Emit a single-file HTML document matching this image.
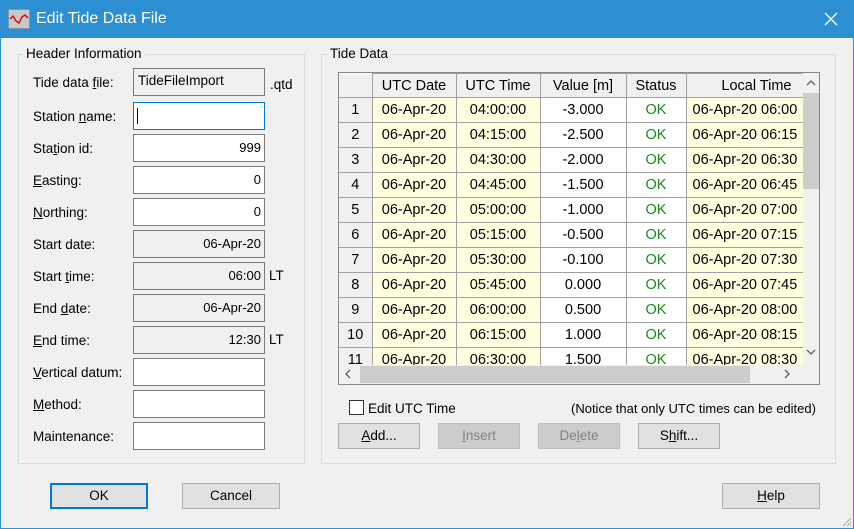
<!DOCTYPE html>
<html><head><style>
*{box-sizing:border-box;margin:0;padding:0}
body{width:854px;height:529px;overflow:hidden;background:#f0f0f0;font-family:"Liberation Sans",sans-serif;font-size:13.5px;color:#000;position:relative}
.a{position:absolute}
#win{position:absolute;left:0;top:0;width:854px;height:529px;border:1px solid #2b8fd2}
#tb{position:absolute;left:0;top:0;width:854px;height:38px;background:#2b8fd2;color:#fff}
.grp{position:absolute;border:1px solid #dcdcdc}
.gl{position:absolute;background:#f0f0f0;padding:0 3px;font-size:13.5px}
.lb{position:absolute;left:33px;font-size:13.5px}
.in{position:absolute;left:133px;width:132px;height:28px;border:1px solid #7a7a7a;background:#fff;text-align:right;padding:5px 3px 0 0;font-size:13px}
.ro{background:#f0f0f0}
.btn{position:absolute;height:26px;border:1px solid #adadad;background:#e1e1e1;text-align:center;line-height:24px;font-size:13.5px}
.dis{background:#cccccc;border-color:#bfbfbf;color:#838383}
table{border-collapse:collapse;position:absolute;table-layout:fixed;width:477px}
td{height:25px;border:1px solid #a0a0a0;text-align:center;font-size:14.5px;padding:0;white-space:nowrap;overflow:hidden}
tr.h td{height:24px;background:#f0f0f0}
td.y{background:#ffffe0}
td.w{background:#fff}
td.ok{background:#fff;color:#1a8a1a}
td.rh{background:#f0f0f0}
td.l{text-align:left;padding-left:6px;background:#ffffe0}
u{text-decoration:underline}
</style></head><body>
<div id="win"></div>
<div id="tb">
<svg class="a" style="left:8px;top:9px" width="22" height="20"><rect x="0.5" y="0.5" width="21" height="19" fill="#c8c8c8" stroke="#888" stroke-dasharray="1,1"/><path d="M2 10 L5 7 L8 12 L11 14 L14 8 L17 6 L20 9" fill="none" stroke="#d00" stroke-width="1.4"/></svg>
<div class="a" style="left:36px;top:10px;font-size:16px">Edit Tide Data File</div>
<svg class="a" style="left:823px;top:11px" width="16" height="16"><path d="M2 2L14 14M14 2L2 14" stroke="#fff" stroke-width="1.3"/></svg>
</div>

<div class="grp" style="left:18px;top:54px;width:287px;height:410px"></div>
<div class="gl" style="left:23px;top:46px">Header Information</div>
<div class="grp" style="left:321px;top:54px;width:515px;height:410px"></div>
<div class="gl" style="left:327px;top:46px">Tide Data</div>

<div class="lb" style="top:75px">Tide data <u>f</u>ile:</div>
<div class="in ro" style="top:68px;text-align:left;padding-left:4px;padding-top:4px;font-size:13.5px">TideFileImport</div>
<div class="a" style="left:270px;top:77px">.qtd</div>
<div class="lb" style="top:109px">Station <u>n</u>ame:</div>
<div class="in" style="top:102px;border-color:#0078d7;text-align:left;padding-left:3px"><span style="display:inline-block;width:1px;height:16px;background:#000;margin-top:0"></span></div>
<div class="lb" style="top:141px">Sta<u>t</u>ion id:</div>
<div class="in" style="top:134px">999</div>
<div class="lb" style="top:173px"><u>E</u>asting:</div>
<div class="in" style="top:166px">0</div>
<div class="lb" style="top:205px"><u>N</u>orthing:</div>
<div class="in" style="top:198px">0</div>
<div class="lb" style="top:237px">Start date:</div>
<div class="in ro" style="top:230px">06-Apr-20</div>
<div class="lb" style="top:269px">Start <u>t</u>ime:</div>
<div class="in ro" style="top:262px">06:00</div>
<div class="a" style="left:269px;top:268px">LT</div>
<div class="lb" style="top:301px">End <u>d</u>ate:</div>
<div class="in ro" style="top:294px">06-Apr-20</div>
<div class="lb" style="top:333px"><u>E</u>nd time:</div>
<div class="in ro" style="top:326px">12:30</div>
<div class="a" style="left:269px;top:332px">LT</div>
<div class="lb" style="top:365px"><u>V</u>ertical datum:</div>
<div class="in" style="top:358px"></div>
<div class="lb" style="top:397px"><u>M</u>ethod:</div>
<div class="in" style="top:390px"></div>
<div class="lb" style="top:429px">Maintenance:</div>
<div class="in" style="top:422px"></div>

<div class="a" style="left:338px;top:72px;width:482px;height:313px;border:1px solid #828790;background:#fff;overflow:hidden">
</div>
<div class="a" style="left:339px;top:73px;width:464px;height:292px;overflow:hidden">
<table style="left:0;top:0">
<colgroup><col style="width:33px"><col style="width:84px"><col style="width:84px"><col style="width:86px"><col style="width:60px"><col style="width:130px"></colgroup>
<tr class="h"><td style="border-top:0;border-left:0"></td><td>UTC Date</td><td>UTC Time</td><td>Value [m]</td><td>Status</td><td style="text-align:right;padding-right:24px">Local Time</td></tr>
<tr><td class="rh" style="border-left:0">1</td><td class="y">06-Apr-20</td><td class="y">04:00:00</td><td class="w">-3.000</td><td class="ok">OK</td><td class="l">06-Apr-20 06:00</td></tr>
<tr><td class="rh" style="border-left:0">2</td><td class="y">06-Apr-20</td><td class="y">04:15:00</td><td class="w">-2.500</td><td class="ok">OK</td><td class="l">06-Apr-20 06:15</td></tr>
<tr><td class="rh" style="border-left:0">3</td><td class="y">06-Apr-20</td><td class="y">04:30:00</td><td class="w">-2.000</td><td class="ok">OK</td><td class="l">06-Apr-20 06:30</td></tr>
<tr><td class="rh" style="border-left:0">4</td><td class="y">06-Apr-20</td><td class="y">04:45:00</td><td class="w">-1.500</td><td class="ok">OK</td><td class="l">06-Apr-20 06:45</td></tr>
<tr><td class="rh" style="border-left:0">5</td><td class="y">06-Apr-20</td><td class="y">05:00:00</td><td class="w">-1.000</td><td class="ok">OK</td><td class="l">06-Apr-20 07:00</td></tr>
<tr><td class="rh" style="border-left:0">6</td><td class="y">06-Apr-20</td><td class="y">05:15:00</td><td class="w">-0.500</td><td class="ok">OK</td><td class="l">06-Apr-20 07:15</td></tr>
<tr><td class="rh" style="border-left:0">7</td><td class="y">06-Apr-20</td><td class="y">05:30:00</td><td class="w">-0.100</td><td class="ok">OK</td><td class="l">06-Apr-20 07:30</td></tr>
<tr><td class="rh" style="border-left:0">8</td><td class="y">06-Apr-20</td><td class="y">05:45:00</td><td class="w">0.000</td><td class="ok">OK</td><td class="l">06-Apr-20 07:45</td></tr>
<tr><td class="rh" style="border-left:0">9</td><td class="y">06-Apr-20</td><td class="y">06:00:00</td><td class="w">0.500</td><td class="ok">OK</td><td class="l">06-Apr-20 08:00</td></tr>
<tr><td class="rh" style="border-left:0">10</td><td class="y">06-Apr-20</td><td class="y">06:15:00</td><td class="w">1.000</td><td class="ok">OK</td><td class="l">06-Apr-20 08:15</td></tr>
<tr><td class="rh" style="border-left:0">11</td><td class="y">06-Apr-20</td><td class="y">06:30:00</td><td class="w">1.500</td><td class="ok">OK</td><td class="l">06-Apr-20 08:30</td></tr>
</table>
</div>
<!-- vertical scrollbar -->
<div class="a" style="left:803px;top:73px;width:16px;height:292px;background:#f0f0f0"></div>
<div class="a" style="left:803px;top:93px;width:16px;height:96px;background:#cdcdcd"></div>
<svg class="a" style="left:805px;top:78px" width="12" height="10"><path d="M2 7L6 3L10 7" fill="none" stroke="#606060" stroke-width="1.3"/></svg>
<svg class="a" style="left:805px;top:347px" width="12" height="10"><path d="M2 3L6 7L10 3" fill="none" stroke="#606060" stroke-width="1.3"/></svg>
<!-- horizontal scrollbar -->
<div class="a" style="left:339px;top:365px;width:480px;height:19px;background:#f0f0f0"></div>
<div class="a" style="left:360px;top:366px;width:390px;height:17px;background:#cdcdcd"></div>
<svg class="a" style="left:342px;top:368px" width="12" height="12"><path d="M8 2L4 6L8 10" fill="none" stroke="#606060" stroke-width="1.3"/></svg>
<svg class="a" style="left:781px;top:368px" width="12" height="12"><path d="M4 2L8 6L4 10" fill="none" stroke="#606060" stroke-width="1.3"/></svg>

<div class="a" style="left:349px;top:400px;width:15px;height:15px;border:1px solid #333;background:#fff"></div>
<div class="a" style="left:368px;top:401px">Edit UTC Time</div>
<div class="a" style="left:571px;top:401px;font-size:13px">(Notice that only UTC times can be edited)</div>

<div class="btn" style="left:338px;top:423px;width:82px"><u>A</u>dd...</div>
<div class="btn dis" style="left:438px;top:423px;width:82px"><u>I</u>nsert</div>
<div class="btn dis" style="left:538px;top:423px;width:82px">De<u>l</u>ete</div>
<div class="btn" style="left:638px;top:423px;width:82px">S<u>h</u>ift...</div>

<div class="btn" style="left:50px;top:483px;width:98px;border:2px solid #0078d7;line-height:22px">OK</div>
<div class="btn" style="left:182px;top:483px;width:98px">Cancel</div>
<div class="btn" style="left:722px;top:483px;width:98px"><u>H</u>elp</div>
<svg class="a" style="left:840px;top:515px" width="12" height="12"><path d="M11 3L3 11M11 7L7 11M11 10L10 11" stroke="#b0b0b0"/></svg>
</body></html>
